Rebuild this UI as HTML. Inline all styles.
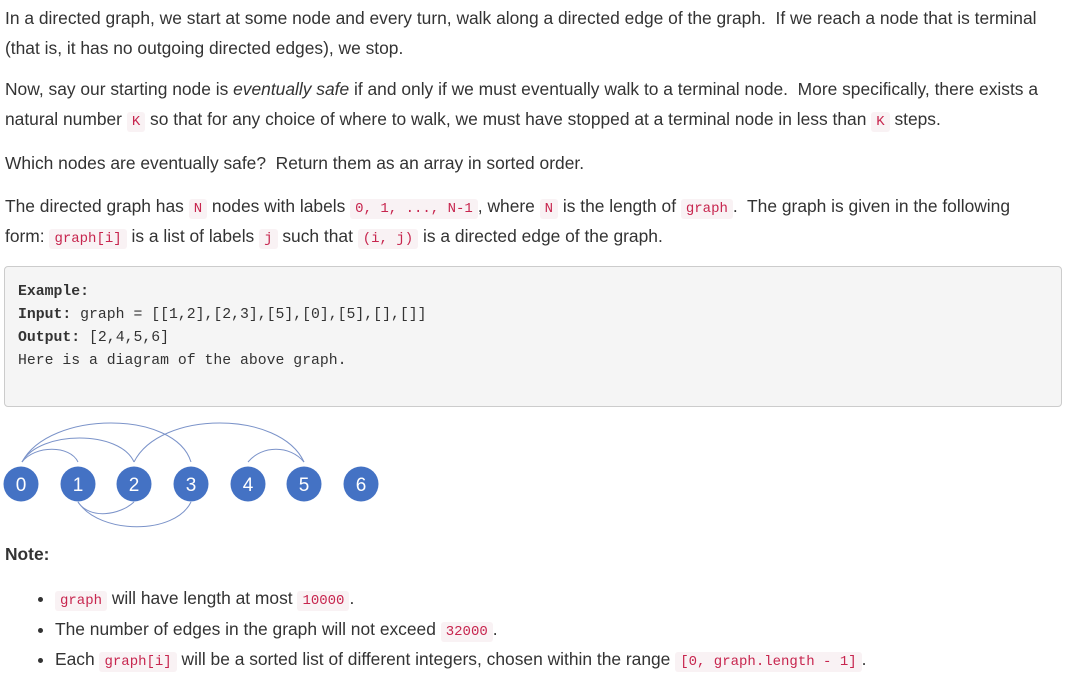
<!DOCTYPE html>
<html><head><meta charset="utf-8"><style>
body{margin:0;background:#fff;width:1071px;height:678px;overflow:hidden;font-family:"Liberation Sans",Arial,sans-serif;font-size:17.4px;color:#333;position:relative}
.p{position:absolute;left:5px;white-space:nowrap;line-height:30px}
code{font-family:"Liberation Mono","DejaVu Sans Mono",monospace;font-size:14px;line-height:1;color:#c7254e;background:#f9f2f4;padding:2px 5px;border-radius:3px}
pre{position:absolute;left:4px;top:266px;width:1058px;height:141px;margin:0;background:#f5f5f5;border:1px solid #ccc;border-radius:4px;box-sizing:border-box;padding:14px 13px;font-family:"Liberation Mono","DejaVu Sans Mono",monospace;font-size:14.8px;line-height:23px;color:#333}
ul{position:absolute;left:0;top:583px;margin:0;padding-left:55px;white-space:nowrap}
li{height:30.5px;line-height:30.5px}
</style></head><body>
<div class="p" style="top:3px">In a directed graph, we start at some node and every turn, walk along a directed edge of the graph.&nbsp; If we reach a node that is terminal<br>(that is, it has no outgoing directed edges), we stop.</div>
<div class="p" style="top:74px">Now, say our starting node is <i>eventually safe</i> if and only if we must eventually walk to a terminal node.&nbsp; More specifically, there exists a<br>natural number <code>K</code> so that for any choice of where to walk, we must have stopped at a terminal node in less than <code>K</code> steps.</div>
<div class="p" style="top:148px">Which nodes are eventually safe?&nbsp; Return them as an array in sorted order.</div>
<div class="p" style="top:191px">The directed graph has <code>N</code> nodes with labels <code>0, 1, ..., N-1</code>, where <code>N</code> is the length of <code>graph</code>.&nbsp; The graph is given in the following<br>form: <code>graph[i]</code> is a list of labels <code>j</code> such that <code>(i, j)</code> is a directed edge of the graph.</div>
<pre><b>Example:</b>
<b>Input:</b> graph = [[1,2],[2,3],[5],[0],[5],[],[]]
<b>Output:</b> [2,4,5,6]
Here is a diagram of the above graph.</pre>
<svg style="position:absolute;left:0;top:410px" width="400" height="130" viewBox="0 410 400 130" fill="none" stroke="#7b93c9" stroke-width="1">
<path d="M22 462 C40 430 120 430 134 462"/>
<path d="M22 462 C35 445 70 445 78 462"/>
<path d="M22 462 C50 410 175 410 191 462"/>
<path d="M134 462 C160 410 280 410 304 462"/>
<path d="M248 462 C262 445 290 445 304 462"/>
<path d="M78 502 C90 520 120 515 134 502"/>
<path d="M78 502 C100 535 175 535 191 502"/>
<g fill="#4472c4" stroke="none">
<circle cx="21" cy="484" r="17.5"/><circle cx="78" cy="484" r="17.5"/><circle cx="134" cy="484" r="17.5"/><circle cx="191" cy="484" r="17.5"/><circle cx="248" cy="484" r="17.5"/><circle cx="304" cy="484" r="17.5"/><circle cx="361" cy="484" r="17.5"/>
</g>
<g fill="#fff" stroke="none" font-family="Liberation Sans,sans-serif" font-size="19" text-anchor="middle">
<text x="21" y="491">0</text><text x="78" y="491">1</text><text x="134" y="491">2</text><text x="191" y="491">3</text><text x="248" y="491">4</text><text x="304" y="491">5</text><text x="361" y="491">6</text>
</g></svg>
<div class="p" style="top:539px;font-weight:bold">Note:</div>
<ul>
<li><code>graph</code> will have length at most <code>10000</code>.</li>
<li>The number of edges in the graph will not exceed <code>32000</code>.</li>
<li>Each <code>graph[i]</code> will be a sorted list of different integers, chosen within the range <code>[0, graph.length - 1]</code>.</li>
</ul>
</body></html>
